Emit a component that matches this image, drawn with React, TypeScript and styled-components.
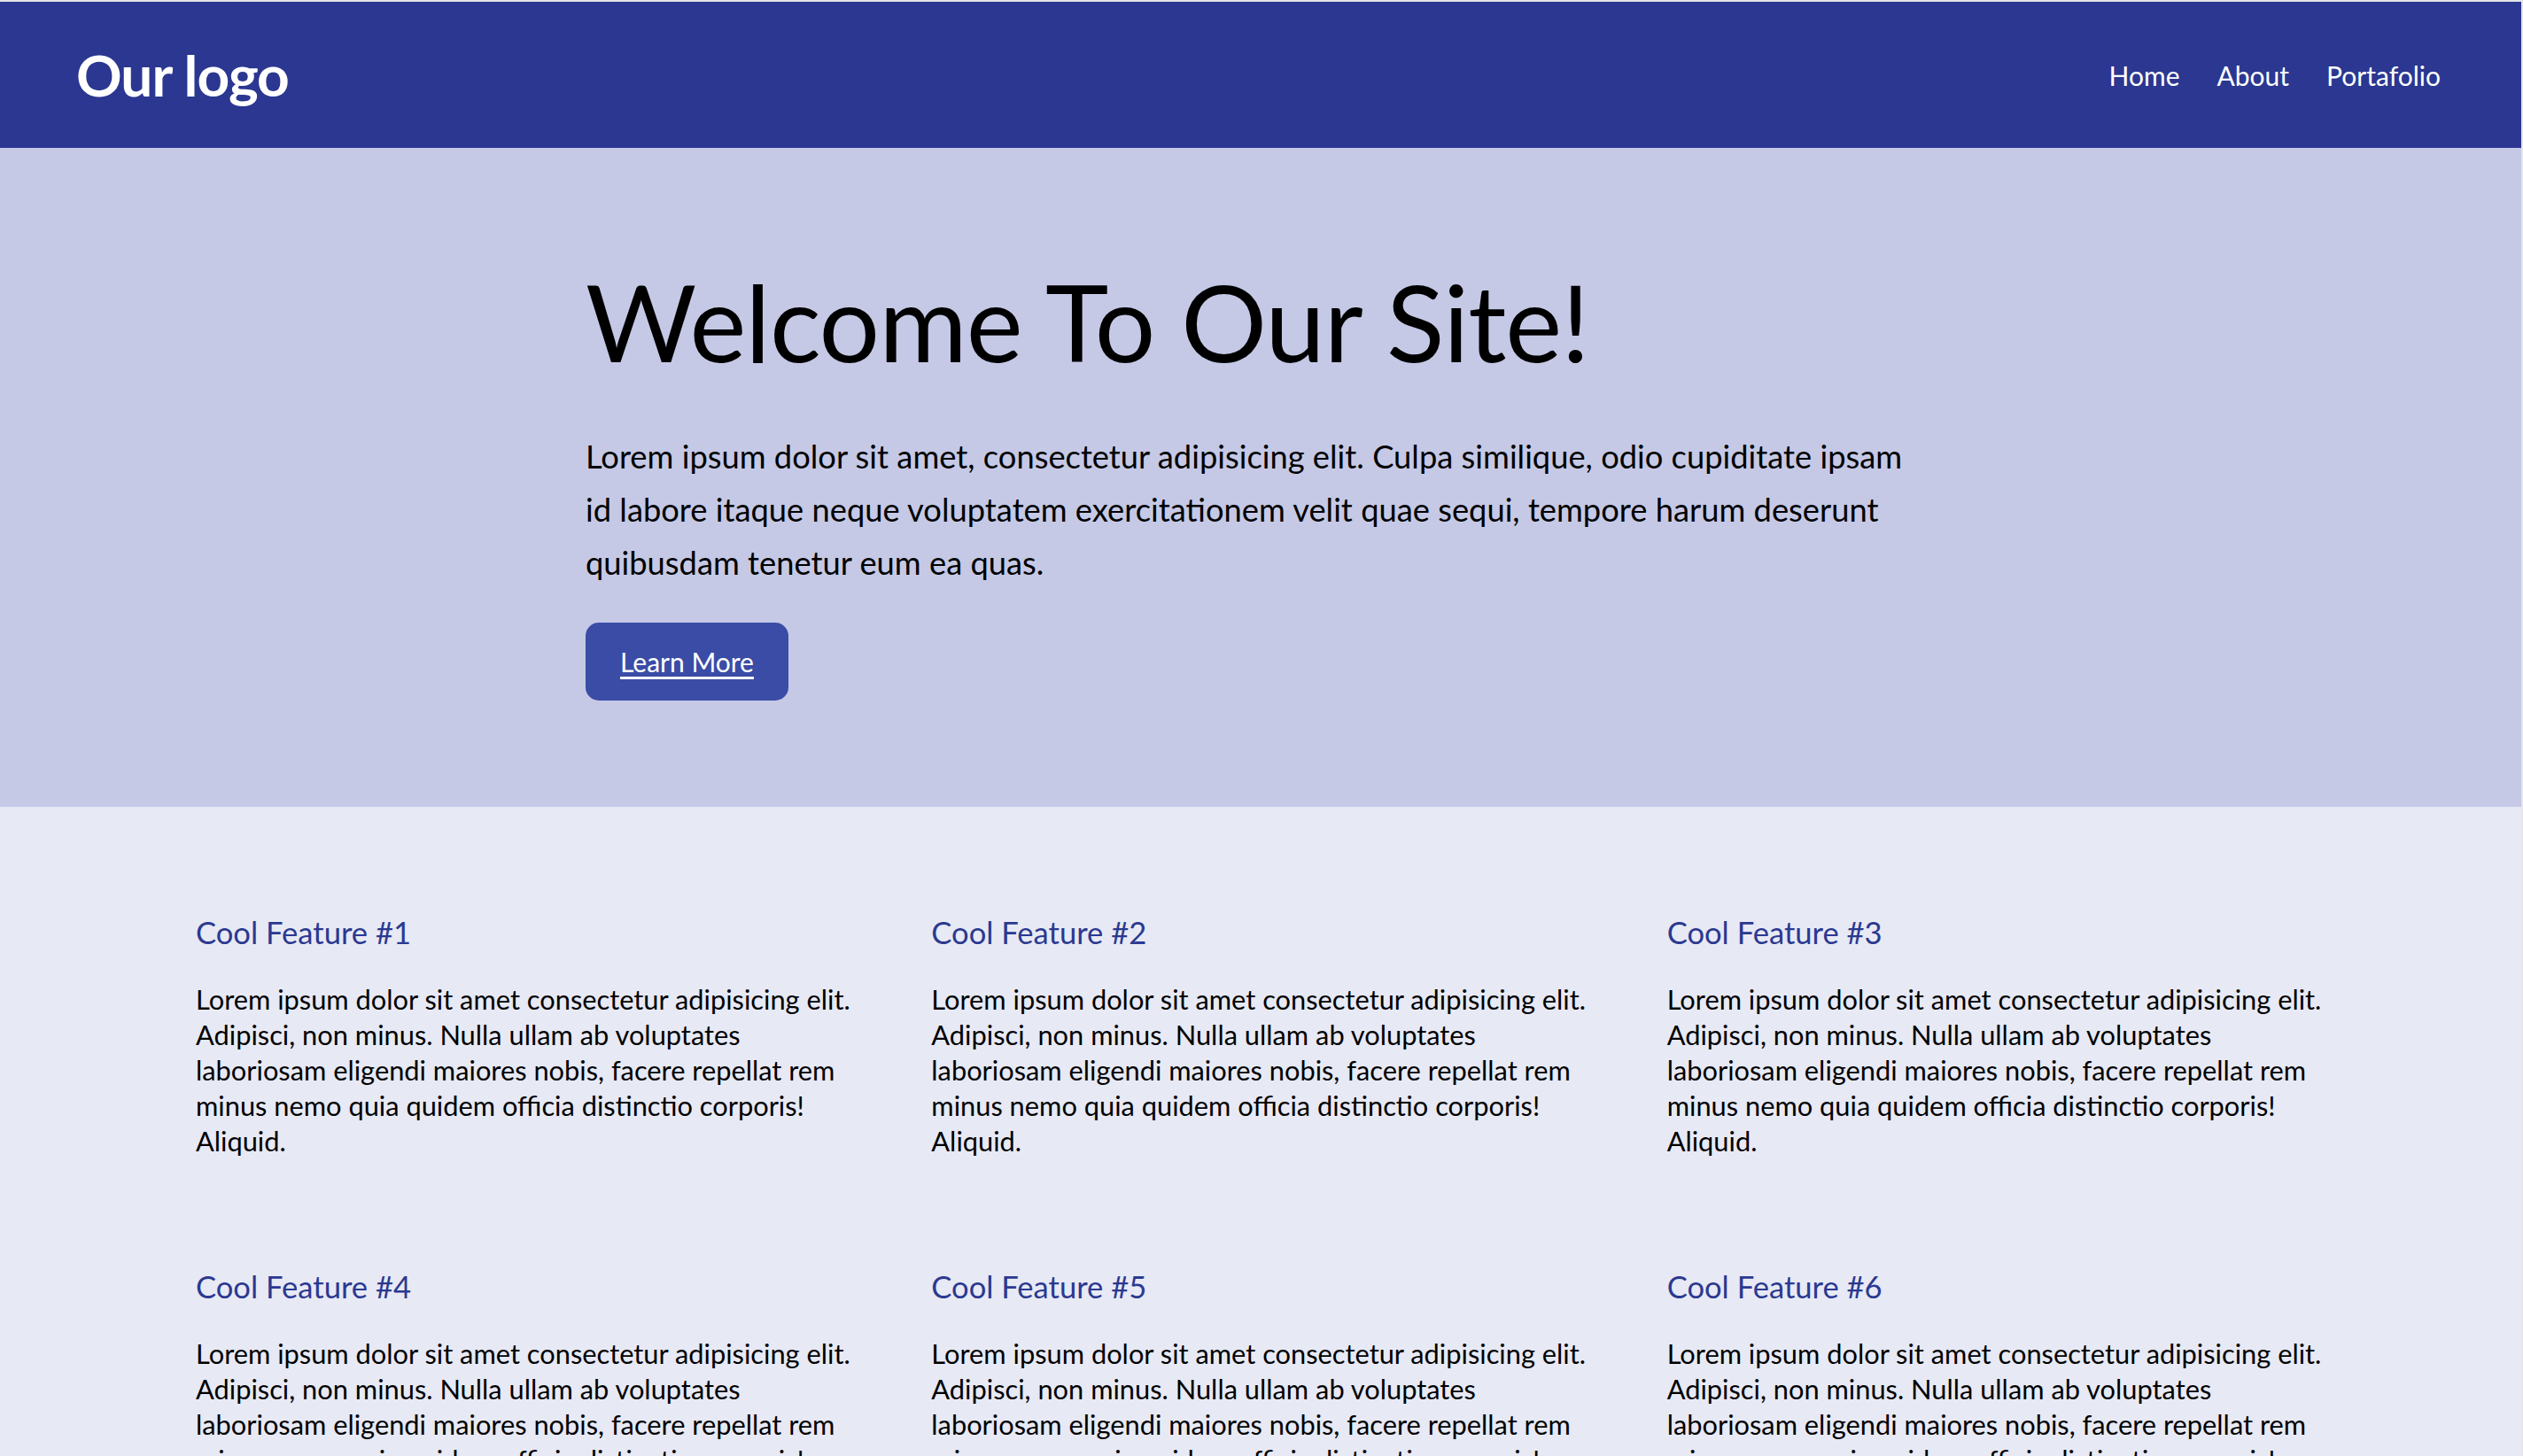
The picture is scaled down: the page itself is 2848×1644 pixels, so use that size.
import React from 'react';
import styled, { createGlobalStyle } from 'styled-components';

const GlobalStyle = createGlobalStyle`
    html {
        background: #e4e4ea;
    }
    body {
        margin: 2px 2px 0 0;
        font-family: Lato, "Open Sans", sans-serif;
        color: #000;
    }
    * {
        box-sizing: border-box;
    }
`;

interface IFeature {
    title: string;
    text: string;
}

const loremFeature = 'Lorem ipsum dolor sit amet consectetur adipisicing elit. Adipisci, non minus. Nulla ullam ab voluptates laboriosam eligendi maiores nobis, facere repellat rem minus nemo quia quidem officia distinctio corporis! Aliquid.';

const features: IFeature[] = [1, 2, 3, 4, 5, 6].map((n) => ({
    title: `Cool Feature #${n}`,
    text: loremFeature,
}));

const navLinks = ['Home', 'About', 'Portafolio'];

const App = () => {
    return (
        <>
            <GlobalStyle />

            <Header>
                <Logo>Our logo</Logo>
                <Nav>
                    {navLinks.map((link) => (
                        <NavLink key={link} href="#">{link}</NavLink>
                    ))}
                </Nav>
            </Header>

            <Hero>
                <HeroInner>
                    <Title>Welcome To Our Site!</Title>
                    <Lead>
                        Lorem ipsum dolor sit amet, consectetur adipisicing elit. Culpa similique, odio cupiditate ipsam id labore itaque neque voluptatem exercitationem velit quae sequi, tempore harum deserunt quibusdam tenetur eum ea quas.
                    </Lead>
                    <Btn href="#">Learn More</Btn>
                </HeroInner>
            </Hero>

            <Features>
                <Grid>
                    {features.map((f) => (
                        <Card key={f.title}>
                            <CardTitle>{f.title}</CardTitle>
                            <CardText>{f.text}</CardText>
                        </Card>
                    ))}
                </Grid>
            </Features>
        </>
    );
};

export default App;

const Header = styled.header`
    height: 165px;
    background: #2b3790;
    display: flex;
    align-items: center;
    justify-content: space-between;
    padding: 0 91px 0 86px;
`;

const Logo = styled.div`
    color: #fff;
    font-weight: 700;
    font-size: 64px;
    letter-spacing: -1px;
`;

const Nav = styled.nav`
    display: flex;
    gap: 42px;
`;

const NavLink = styled.a`
    color: #fff;
    text-decoration: none;
    font-size: 30px;
`;

const Hero = styled.section`
    background: #c5c9e6;
    padding: 132px 0 120px 661px;
`;

const HeroInner = styled.div`
    max-width: 1516px;
`;

const Title = styled.h1`
    margin: 0;
    font-size: 121px;
    font-weight: 400;
    line-height: 128px;
    letter-spacing: -1px;
`;

const Lead = styled.p`
    margin: 58px 0 38px;
    font-size: 36.3px;
    line-height: 60px;
`;

const Btn = styled.a`
    display: inline-flex;
    align-items: center;
    justify-content: center;
    height: 88px;
    padding: 0 39px;
    background: #3a4ca5;
    border-radius: 15px;
    color: #fff;
    font-size: 30px;
    text-decoration: underline;
    text-underline-offset: 5px;
`;

const Features = styled.section`
    background: #e7e9f5;
    padding: 118px 221px 120px;
`;

const Grid = styled.div`
    display: grid;
    grid-template-columns: repeat(3, 1fr);
    column-gap: 87px;
    row-gap: 120px;
`;

const Card = styled.article`
    display: flex;
    flex-direction: column;
`;

const CardTitle = styled.h3`
    margin: 0 0 32px;
    color: #2b3990;
    font-size: 34.6px;
    font-weight: 400;
    line-height: 48px;
`;

const CardText = styled.p`
    margin: 0;
    font-size: 30.8px;
    line-height: 40px;
`;
